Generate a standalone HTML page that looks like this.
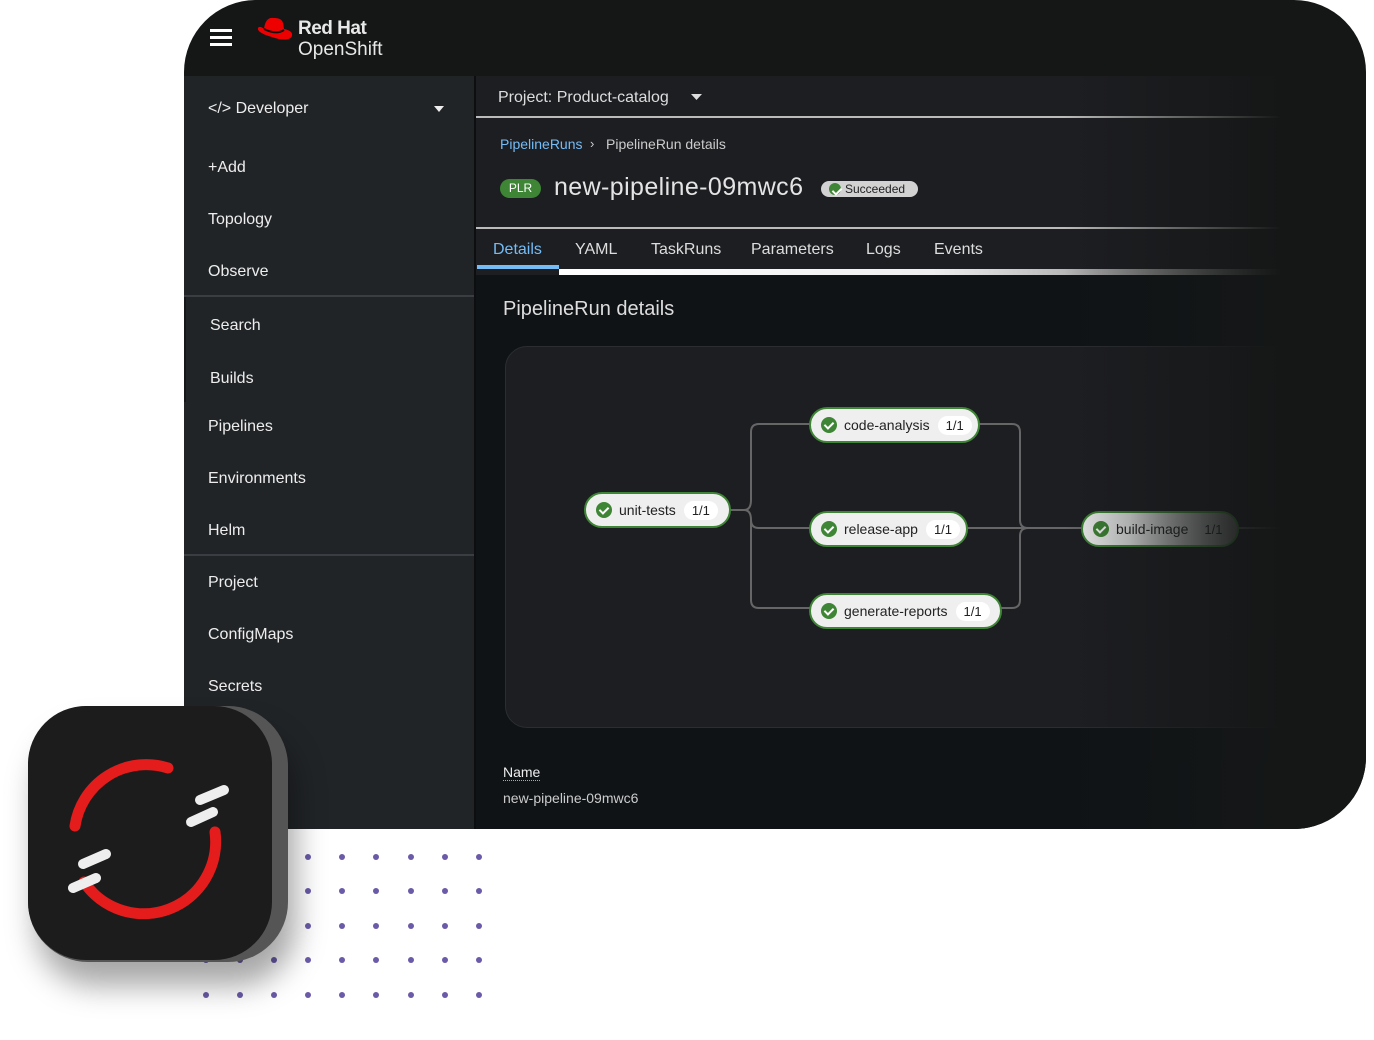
<!DOCTYPE html>
<html><head><meta charset="utf-8"><style>
*{margin:0;padding:0;box-sizing:border-box}
body{width:1374px;height:1040px;background:#fff;position:relative;overflow:hidden;font-family:"Liberation Sans",sans-serif;color:#e8e8e8}
.abs{position:absolute}
#dev{left:184px;top:0;width:1182px;height:829px;background:#151717;border-radius:72px 72px 72px 0;overflow:hidden}
#side{left:0;top:76px;width:290px;height:753px;background:#212427}
.nav{position:absolute;left:24px;font-size:16px;color:#ededed}
.sep{position:absolute;left:0;width:290px;height:2px;background:#3a3d41}
#main{left:292px;top:76px;width:830px;height:753px;background:#1d1e22}
#low{left:292px;top:275px;width:830px;height:554px;background:#0f1316}
#fade{left:880px;top:76px;width:302px;height:753px;background:linear-gradient(90deg,rgba(21,23,23,0),#151717 72%)}
.pill{position:absolute;height:36px;border-radius:18px;background:#efefef;border:2px solid #3e8635;color:#222;font-size:14px;display:flex;align-items:center;padding-left:10px}
.ck{width:16px;height:16px;border-radius:50%;background:#3e8635;margin-right:7px;position:relative;flex:none}
.ck:after{content:"";position:absolute;left:5px;top:3px;width:4px;height:7px;border:solid #fff;border-width:0 2px 2px 0;transform:rotate(45deg)}
.cnt{background:#fff;border-radius:10px;padding:2px 8px;margin-left:8px;font-size:13px}
.dot{position:absolute;width:6px;height:6px;border-radius:50%;background:#6a5aa8}
</style></head><body>
<div id="dots"></div>
<div class="abs" id="dev">
 <svg class="abs" style="left:26px;top:29px" width="22" height="18"><rect y="0" width="22" height="3" fill="#fff"/><rect y="7" width="22" height="3" fill="#fff"/><rect y="14" width="22" height="3" fill="#fff"/></svg>
 <svg class="abs" style="left:72px;top:15px" width="38" height="28" viewBox="0 0 38 28"><path d="M8 14 C9 6 12 2 18 3 C22 3 26 4 27 8 L28 14 C33 15 37 17 36 21 C34 26 24 25 16 22 C9 20 1 17 2 13 C3 11 6 12 8 14Z" fill="#e00"/><path d="M8 14 C14 17 22 19 28 15" stroke="#111" stroke-width="2" fill="none"/></svg>
 <div class="abs" style="left:114px;top:18px;font-size:19px;font-weight:bold;letter-spacing:-0.5px">Red Hat</div>
 <div class="abs" style="left:114px;top:39px;font-size:19px">OpenShift</div>
 <div class="abs" id="side">
  <div class="nav" style="top:24px">&lt;/&gt; Developer</div>
  <svg class="abs" style="left:250px;top:30px" width="10" height="6"><path d="M0 0H10L5 6Z" fill="#eee"/></svg>
  <div class="nav" style="top:83px">+Add</div>
  <div class="nav" style="top:135px">Topology</div>
  <div class="nav" style="top:187px">Observe</div>
  <div class="sep" style="top:219px"></div>
  <div class="abs" style="left:0;top:221px;width:2px;height:105px;background:#15171a"></div>
  <div class="nav" style="top:241px;left:26px">Search</div>
  <div class="nav" style="top:294px;left:26px">Builds</div>
  <div class="nav" style="top:342px">Pipelines</div>
  <div class="nav" style="top:394px">Environments</div>
  <div class="nav" style="top:446px">Helm</div>
  <div class="sep" style="top:478px"></div>
  <div class="nav" style="top:498px">Project</div>
  <div class="nav" style="top:550px">ConfigMaps</div>
  <div class="nav" style="top:602px">Secrets</div>
 </div>
 <div class="abs" style="left:290px;top:76px;width:2px;height:753px;background:#0c0e10"></div>
 <div class="abs" id="main"></div>
 <div class="abs" id="low"></div>
 <div class="abs" style="left:314px;top:89px;font-size:16px;color:#ddd">Project: Product-catalog</div>
 <svg class="abs" style="left:507px;top:94px" width="11" height="6"><path d="M0 0H11L5.5 6Z" fill="#ddd"/></svg>
 <div class="abs" style="left:292px;top:116px;width:830px;height:2px;background:#bbb"></div>
 <div class="abs" style="left:316px;top:136px;font-size:14px;color:#73bcf7">PipelineRuns</div>
 <div class="abs" style="left:406px;top:136px;font-size:13px;color:#ccc">›</div>
 <div class="abs" style="left:422px;top:136px;font-size:14px;color:#ccc">PipelineRun details</div>
 <div class="abs" style="left:316px;top:179px;width:41px;height:19px;border-radius:10px;background:#3e8635;font-size:12px;color:#fff;text-align:center;line-height:19px">PLR</div>
 <div class="abs" style="left:370px;top:173px;font-size:25px;letter-spacing:0.4px;color:#e4e4e4">new-pipeline-09mwc6</div>
 <div class="abs" style="left:637px;top:181px;width:97px;height:16px;border-radius:8px;background:#d2d2d2;color:#222;font-size:12px;line-height:16px;padding-left:24px"><span class="ck" style="position:absolute;left:8px;top:2px;width:12px;height:12px;margin:0"></span>Succeeded</div>
 <div class="abs" style="left:292px;top:227px;width:830px;height:2px;background:#bbb"></div>
 <div class="abs" style="left:309px;top:241px;font-size:16px;color:#73bcf7">Details</div>
 <div class="abs" style="left:391px;top:241px;font-size:16px;color:#ddd">YAML</div>
 <div class="abs" style="left:467px;top:241px;font-size:16px;color:#ddd">TaskRuns</div>
 <div class="abs" style="left:567px;top:241px;font-size:16px;color:#ddd">Parameters</div>
 <div class="abs" style="left:682px;top:241px;font-size:16px;color:#ddd">Logs</div>
 <div class="abs" style="left:750px;top:241px;font-size:16px;color:#ddd">Events</div>
 <div class="abs" style="left:293px;top:265px;width:82px;height:4px;background:#73bcf7"></div>
 <div class="abs" style="left:375px;top:269px;width:747px;height:6px;background:linear-gradient(90deg,#fff,#eee 50%,#555)"></div>
 <div class="abs" style="left:319px;top:298px;font-size:20px;color:#ddd">PipelineRun details</div>
 <div class="abs" style="left:321px;top:346px;width:800px;height:382px;border-radius:22px;background:#1d1e22;border:1px solid #2c2d31"></div>
 <svg class="abs" style="left:0;top:0" width="1182" height="829"><g stroke="#666" stroke-width="2" fill="none">
  <path d="M546 510H560 Q567 510 567 500V432Q567 424 575 424H628"/><path d="M560 510Q567 510 567 520V600Q567 608 575 608H628"/><path d="M567 520Q567 528 575 528H628"/>
  <path d="M795 424H828Q836 424 836 432V520Q836 528 844 528H900"/><path d="M782 528H844"/><path d="M817 608H828Q836 608 836 600V536Q836 528 844 528"/><path d="M1052 528H1120"/></g></svg>
 <div class="pill" style="left:400px;top:492px;width:147px">  <span class="ck"></span>unit-tests<span class="cnt">1/1</span></div>
 <div class="pill" style="left:625px;top:407px;width:171px"><span class="ck"></span>code-analysis<span class="cnt">1/1</span></div>
 <div class="pill" style="left:625px;top:511px;width:159px"><span class="ck"></span>release-app<span class="cnt">1/1</span></div>
 <div class="pill" style="left:625px;top:593px;width:193px"><span class="ck"></span>generate-reports<span class="cnt">1/1</span></div>
 <div class="pill" style="left:897px;top:511px;width:158px;background:linear-gradient(90deg,#efefef 30%,#777)"><span class="ck"></span>build-image<span class="cnt" style="background:transparent">1/1</span></div>
 <div class="abs" style="left:319px;top:764px;font-size:14px;color:#eee;border-bottom:1px dotted #aaa">Name</div>
 <div class="abs" style="left:319px;top:790px;font-size:14px;color:#ccc">new-pipeline-09mwc6</div>
 <div class="abs" id="fade"></div>
</div>
<div class="abs" style="left:28px;top:706px;width:260px;height:256px;border-radius:60px;background:#555;box-shadow:8px 24px 30px rgba(0,0,0,.35)"></div>
<div class="abs" style="left:28px;top:706px;width:244px;height:254px;border-radius:58px;background:#1c1c1c"></div>
<svg class="abs" style="left:28px;top:706px" width="260" height="256" viewBox="0 0 260 256">
 <g fill="none" stroke="#e51c1c" stroke-width="11" stroke-linecap="round">
  <path d="M140 62 A72 72 0 0 0 47 120"/><path d="M187 126 A72 72 0 0 1 56 176"/>
 </g>
 <g stroke="#eee" stroke-width="10" stroke-linecap="round">
  <path d="M172 94L196 84"/><path d="M163 116L185 106"/><path d="M55 158L78 148"/><path d="M45 182L68 172"/>
 </g>
</svg>
<script>
var d=document.body;var xs=[206,240,274,308,342,376,411,445,479],ys=[857,891,926,960,995];
ys.forEach(function(y,ri){xs.forEach(function(x){if(ri<3&&x<300)return;var e=document.createElement('div');e.className='dot';e.style.left=(x-3)+'px';e.style.top=(y-3)+'px';d.insertBefore(e,d.firstChild);});});
</script>
</body></html>
